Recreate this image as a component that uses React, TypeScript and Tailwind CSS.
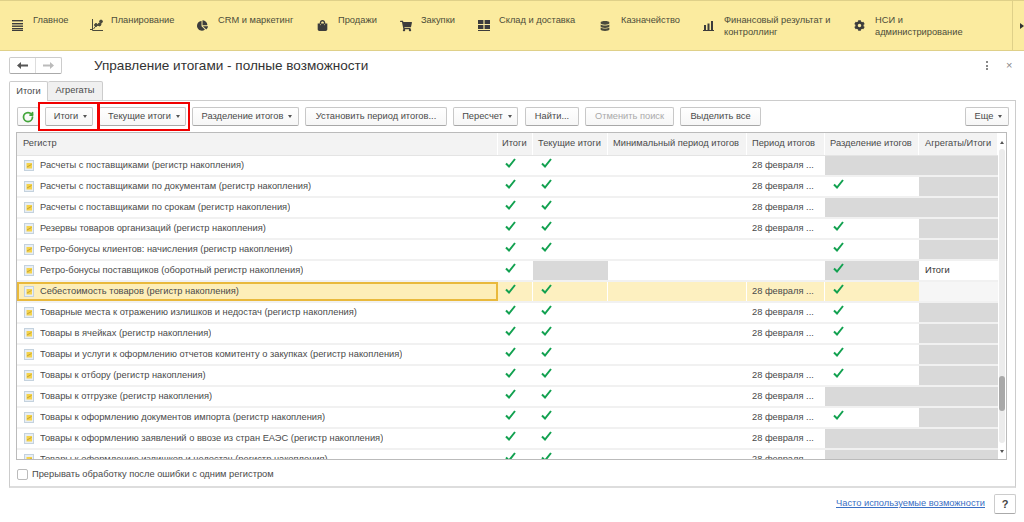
import React from "react";
import { FaChartPie, FaShoppingBag, FaShoppingCart, FaCog, FaDatabase } from "react-icons/fa";
import { RotateCw } from "lucide-react";

const Bars = () => (
  <svg width="11" height="11" viewBox="0 0 11 11" fill="#3c3c3c"><rect x="0" y="0" width="11" height="1.4"/><rect x="0" y="3" width="11" height="1.4"/><rect x="0" y="5.5" width="11" height="1.4"/><rect x="0" y="8" width="11" height="1.4"/><rect x="0" y="10" width="11" height="1"/></svg>
);
const Plan = () => (
  <svg width="13" height="13" viewBox="0 0 13 13" fill="none" stroke="#4a4a3c"><path d="M2.5 0v11.5H13M0 10.5h3"/><path d="M3.5 10 6.5 6l3 .5 2.5-4" strokeWidth="1"/><circle cx="6" cy="6" r="1.4" fill="#4a4a3c"/><circle cx="9.5" cy="5.5" r="1.4" fill="#4a4a3c"/><circle cx="11" cy="2.5" r="1.4" fill="#4a4a3c"/></svg>
);
const Store = () => (
  <svg width="12" height="11" viewBox="0 0 12 11" fill="#3c3c3c"><rect x="0" y="0" width="5.4" height="4"/><rect x="6.6" y="0" width="5.4" height="4"/><rect x="0" y="5" width="5.4" height="4"/><rect x="6.6" y="5" width="5.4" height="4"/><rect x="0" y="10" width="12" height="1"/></svg>
);
const Chart = () => (
  <svg width="11" height="10" viewBox="0 0 11 10" fill="#3c3c3c"><rect x="1" y="4" width="2" height="5"/><rect x="4.5" y="2.5" width="2" height="6.5"/><rect x="8" y="0" width="2" height="9"/><rect x="0" y="9" width="11" height="1"/></svg>
);

const nav = [
  { w: "w-[78px]", icon: <Bars />, label: ["Главное"], top: "mt-[6px]" },
  { w: "w-[107px]", icon: <Plan />, label: ["Планирование"], top: "mt-[5px]", shift: "pl-0" },
  { w: "w-[120px]", icon: <FaChartPie size={11} color="#3c3c3c" />, label: ["CRM и маркетинг"], top: "mt-[6px]" },
  { w: "w-[83px]", icon: <FaShoppingBag size={11} color="#3c3c3c" />, label: ["Продажи"], top: "mt-[6px]" },
  { w: "w-[78px]", icon: <FaShoppingCart size={12} color="#3c3c3c" />, label: ["Закупки"], top: "mt-[6px]" },
  { w: "w-[122px]", icon: <Store />, label: ["Склад и доставка"], top: "mt-[6px]" },
  { w: "w-[103px]", icon: <FaDatabase size={10} color="#4a4a3c" />, label: ["Казначейство"], top: "mt-[7px]" },
  { w: "w-[151px]", icon: <Chart />, label: ["Финансовый результат и", "контроллинг"], top: "mt-[7px]" },
  { w: "w-[158px]", icon: <FaCog size={11} color="#3c3c3c" />, label: ["НСИ и", "администрирование"], top: "mt-[6px]" },
];

const Caret = () => <span className="ml-[5px] inline-block h-0 w-0 border-x-[2.5px] border-t-[3px] border-x-transparent border-t-[#555]" />;

function Btn({ w, children, caret, disabled }: { w: string; children?: React.ReactNode; caret?: boolean; disabled?: boolean }) {
  return (
    <div className={`${w} flex h-[19px] shrink-0 items-center justify-center rounded-[2px] border border-[#c8c8c8] border-b-[#a8a8a8] bg-gradient-to-b from-white to-[#f6f6f6] ${caret ? "pl-[3px]" : ""} ${disabled ? "text-[#aaa]" : "text-[#4a4a4a]"}`}>
      {children}
      {caret && <Caret />}
    </div>
  );
}

const Check = () => (
  <svg width="11" height="10" viewBox="0 0 11 10" fill="none" className="mt-[2px] block"><path d="M1 5.5 L4 8.5 L10 1" stroke="#12a150" strokeWidth="2" /></svg>
);

const RegIcon = () => (
  <svg width="10" height="11" viewBox="0 0 10 11" className="shrink-0"><rect x="0.5" y="0.5" width="9" height="10" fill="#e8eef4" stroke="#c4d2de"/><rect x="2.5" y="3" width="5.5" height="5.5" fill="#f4d24a"/><path d="M3 7 7.5 4.5" stroke="#b8962e" strokeWidth=".8"/></svg>
);

type Row = { name: string; t?: boolean; p?: boolean; s?: "c" | "g" | "gc"; a?: string; sel?: boolean };
const rows: Row[] = [
  { name: "Расчеты с поставщиками (регистр накопления)", t: true, p: true, s: "g" },
  { name: "Расчеты с поставщиками по документам (регистр накопления)", t: true, p: true, s: "c" },
  { name: "Расчеты с поставщиками по срокам (регистр накопления)", t: true, p: true, s: "g" },
  { name: "Резервы товаров организаций (регистр накопления)", t: true, p: true, s: "c" },
  { name: "Ретро-бонусы клиентов: начисления (регистр накопления)", t: true, s: "c" },
  { name: "Ретро-бонусы поставщиков (оборотный регистр накопления)", s: "gc", a: "Итоги" },
  { name: "Себестоимость товаров (регистр накопления)", t: true, p: true, s: "c", sel: true },
  { name: "Товарные места к отражению излишков и недостач (регистр накопления)", t: true, p: true, s: "c" },
  { name: "Товары в ячейках (регистр накопления)", t: true, p: true, s: "c" },
  { name: "Товары и услуги к оформлению отчетов комитенту о закупках (регистр накопления)", t: true, s: "c" },
  { name: "Товары к отбору (регистр накопления)", t: true, p: true, s: "c" },
  { name: "Товары к отгрузке (регистр накопления)", t: true, p: true, s: "g" },
  { name: "Товары к оформлению документов импорта (регистр накопления)", t: true, p: true, s: "c" },
  { name: "Товары к оформлению заявлений о ввозе из стран ЕАЭС (регистр накопления)", t: true, p: true, s: "g" },
  { name: "Товары к оформлению излишков и недостач (регистр накопления)", t: true, p: true, s: "g" },
];

const headers = [
  { w: "w-[481px]", t: "Регистр", pl: "pl-[6px]" },
  { w: "w-[35px]", t: "Итоги", pl: "pl-[4px]" },
  { w: "w-[75px]", t: "Текущие итоги", pl: "pl-[5px]" },
  { w: "w-[139px]", t: "Минимальный период итогов", pl: "pl-[5px]" },
  { w: "w-[78px]", t: "Период итогов", pl: "pl-[5px]" },
  { w: "w-[94px]", t: "Разделение итогов", pl: "pl-[5px]" },
  { w: "w-[79px]", t: "Агрегаты/Итоги", pl: "pl-[6px]" },
];

function TableRow({ r }: { r: Row }) {
  const bg = r.sel ? "bg-[#fdf0c0]" : "bg-white";
  const sep = r.sel ? "border-r border-white" : "";
  return (
    <div className={`flex h-[21px] shrink-0 border-b-2 border-[#f1f1f1] ${bg}`}>
      <div className={`flex w-[481px] items-center gap-[6px] ${r.sel ? "border-2 border-[#e9b93c] bg-[#fdeeb8] pl-[5px]" : "pl-[7px]"}`}>
        <RegIcon />
        <span className="truncate">{r.name}</span>
      </div>
      <div className={`w-[35px] pl-[7px] ${sep}`}><Check /></div>
      <div className={`w-[75px] pl-[8px] ${sep} ${r.t ? "" : "bg-[#d9d9d9]"}`}>{r.t && <Check />}</div>
      <div className={`w-[139px] ${sep}`} />
      <div className={`flex w-[78px] items-center pl-[5px] ${sep}`}>{r.p && "28 февраля ..."}</div>
      <div className={`w-[94px] pl-[8px] ${r.s === "c" ? "" : "bg-[#d9d9d9]"}`}>{r.s !== "g" && <Check />}</div>
      <div className={`flex w-[79px] items-center pl-[6px] ${r.a ? "text-[#333]" : r.sel ? "bg-[#f6f6f6]" : "bg-[#d9d9d9]"}`}>{r.a}</div>
    </div>
  );
}

export default function App() {
  return (
    <div className="flex h-[522px] w-[1024px] flex-col overflow-hidden bg-white text-[9.3px] text-[#4a4a4a]" style={{ fontFamily: '"Liberation Sans", Arial, sans-serif' }}>
      {/* Top nav */}
      <div className="flex h-[51px] shrink-0 border-y border-[#dfd089] bg-[#fbeb9f] pl-[12px]">
        {nav.map((n) => (
          <div key={n.label[0]} className={`${n.w} flex shrink-0 pt-[13px]`}>
            <div className={`${n.top} w-[21px] shrink-0`}>{n.icon}</div>
            <div className="leading-[12px] text-[#4d4d3a]">
              {n.label.map((l) => <div key={l} className="whitespace-nowrap">{l}</div>)}
            </div>
          </div>
        ))}
        <div className="flex flex-1 items-center border-l border-[#dfd089] pl-[7px]">
          <span className="h-0 w-0 border-y-[3.5px] border-l-[4px] border-y-transparent border-l-[#333]" />
        </div>
      </div>

      {/* Title bar */}
      <div className="flex h-[30px] shrink-0 items-center pb-[1px] pl-[9px] pr-[10px]">
        <div className="flex h-[17px] w-[53px] rounded-[2px] border border-[#ccc] border-b-[#aaa] bg-white">
          <div className="flex w-[26px] items-center justify-center border-r border-[#ddd]">
            <svg width="11" height="7" viewBox="0 0 11 7" fill="#555"><path d="M0 3.5 4 0v2.5h7v2H4V7z" /></svg>
          </div>
          <div className="flex flex-1 items-center justify-center">
            <svg width="11" height="7" viewBox="0 0 11 7" fill="#bbb"><path d="M11 3.5 7 0v2.5H0v2h7V7z" /></svg>
          </div>
        </div>
        <div className="ml-[32px] flex-1 text-[13.55px] leading-none text-[#333]">Управление итогами - полные возможности</div>
        <div className="mr-[1px] flex h-[9px] w-[2px] flex-col justify-between">
          <span className="h-[2px] w-[2px] bg-[#888]" /><span className="h-[2px] w-[2px] bg-[#888]" /><span className="h-[2px] w-[2px] bg-[#888]" />
        </div>
        <div className="ml-[17px] w-[8px] text-[11px] leading-none text-[#888]">×</div>
      </div>

      {/* Tabs */}
      <div className="z-10 ml-[9px] flex h-[20px] shrink-0 items-end">
        <div className="flex h-[20px] w-[39px] items-center justify-center rounded-t-[2px] border border-b-0 border-[#ccc] bg-white">Итоги</div>
        <div className="flex h-[20px] w-[55px] items-center justify-center rounded-t-[2px] border border-l-0 border-[#ccc] bg-[#f0f0f0]">Агрегаты</div>
      </div>

      {/* Panel */}
      <div className="-mt-px ml-[9px] flex h-[388px] w-[1007px] shrink-0 flex-col border border-[#ccc] border-b-2 border-b-[#ddd] pl-[6px] pr-[6px]">
        <div className="relative mt-[6px] flex shrink-0 items-center gap-[6px] pl-[1px]">
          <Btn w="w-[22px]"><RotateCw size={12} color="#43a53a" strokeWidth={3.5} /></Btn>
          <Btn w="w-[48px]" caret>Итоги</Btn>
          <Btn w="w-[87px]" caret>Текущие итоги</Btn>
          <Btn w="w-[107px]" caret>Разделение итогов</Btn>
          <Btn w="w-[142px]">Установить период итогов...</Btn>
          <Btn w="w-[65px]" caret>Пересчет</Btn>
          <div className="ml-[1px]"><Btn w="w-[54px]">Найти...</Btn></div>
          <Btn w="w-[89px]" disabled>Отменить поиск</Btn>
          <Btn w="w-[81px]">Выделить все</Btn>
          <div className="ml-auto"><Btn w="w-[44px]" caret>Еще</Btn></div>
          <div className="absolute left-[22px] top-[-5px] h-[29px] w-[61px] border-2 border-[#f00000]" />
          <div className="absolute left-[82px] top-[-5px] h-[29px] w-[92px] border-2 border-[#f00000]" />
        </div>

        {/* Table */}
        <div className="mt-[6px] flex h-[328px] w-[991px] shrink-0 overflow-hidden border border-[#bbb]">
          <div className="flex w-[981px] shrink-0 flex-col overflow-hidden">
            <div className="flex h-[23px] shrink-0 border-b border-[#e4e4e4] bg-[#f3f3f3]">
              {headers.map((h) => (
                <div key={h.t} className={`${h.w} ${h.pl} flex shrink-0 items-center whitespace-nowrap border-r border-white`}>{h.t}</div>
              ))}
            </div>
            {rows.map((r) => <TableRow key={r.name} r={r} />)}
          </div>
          <div className="relative flex-1 bg-white">
            <span className="absolute left-[2px] top-[8px] h-0 w-0 border-x-[2.5px] border-b-[3px] border-x-transparent border-b-[#555]" />
            <div className="absolute bottom-[16px] left-[1px] top-[16px] w-[6px] rounded-[3px] bg-[#ececec]" />
            <div className="absolute left-[1px] top-[243px] h-[35px] w-[6px] rounded-[3px] bg-[#a9a9a9]" />
            <span className="absolute bottom-[6px] left-[2px] h-0 w-0 border-x-[2.5px] border-t-[3px] border-x-transparent border-t-[#555]" />
          </div>
        </div>

        <div className="mt-[8px] flex items-center gap-[4px] pl-[1px]">
          <span className="h-[11px] w-[11px] rounded-[2px] border border-[#bbb] bg-white" />
          <span>Прерывать обработку после ошибки с одним регистром</span>
        </div>
      </div>

      {/* Footer */}
      <div className="mt-[6px] flex shrink-0 items-center justify-end pr-[8px]">
        <span className="text-[#3a6fc4] underline">Часто используемые возможности</span>
        <div className="ml-[9px] flex h-[20px] w-[22px] items-center justify-center rounded-[2px] border border-[#ccc] border-b-[#aaa] bg-white text-[11px] font-bold text-[#444]">?</div>
      </div>
    </div>
  );
}
